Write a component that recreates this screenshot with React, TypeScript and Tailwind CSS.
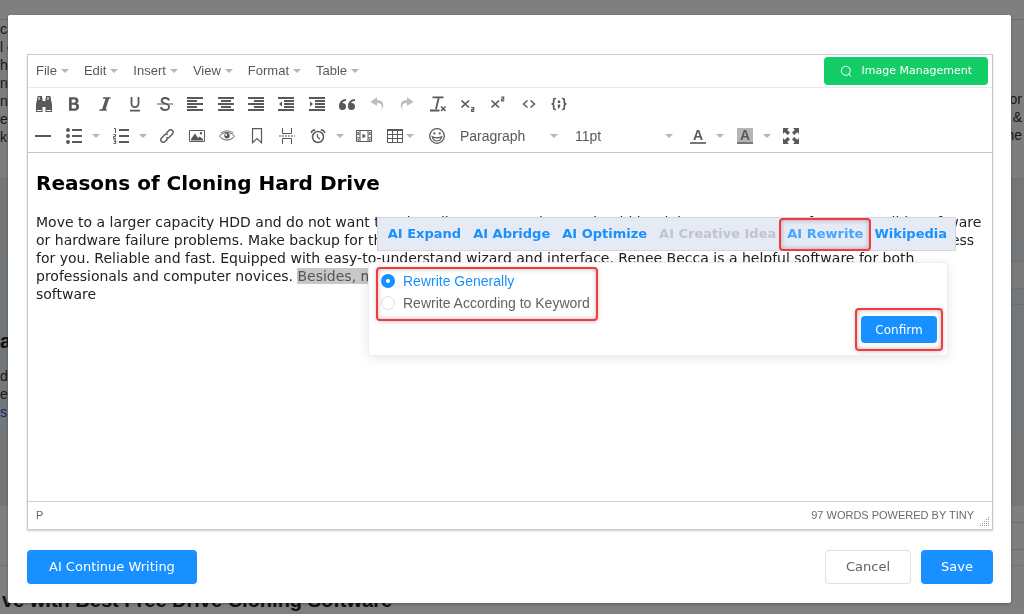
import { useState } from "react";
import type { ReactNode } from "react";

const verdana = "font-['Verdana','DejaVu_Sans',sans-serif]";
const arial = "font-['Arial','Liberation_Sans',sans-serif]";

const menus = ["File", "Edit", "Insert", "View", "Format", "Table"];

const pageLinesLeft = ["ca", "l c", "h", "nt", "nt", "er", "ku"];
const pageLinesRight = ["or", "&", "he"];

function Caret() {
  return (
    <svg aria-hidden="true" width="8" height="4" viewBox="0 0 8 4" className="shrink-0 fill-[#b0b7bf]">
      <path d="M0 0h8L4 4z" />
    </svg>
  );
}

function Icon({ children }: { children: ReactNode }) {
  return (
    <svg
      aria-hidden="true"
      width="16"
      height="16"
      viewBox="0 0 16 16"
      fill="none"
      stroke="currentColor"
      className="shrink-0"
    >
      {children}
    </svg>
  );
}

const solid = { fill: "currentColor", stroke: "none" };

const formatTools: { label: string; muted?: boolean; icon: ReactNode }[] = [
  {
    label: "Find and replace",
    icon: (
      <path
        {...solid}
        d="M1.500 0H6v2h.5v3h3V2h.5V0h4.500v2h.5v3h.4l.6 4v7H9.500v-5h-3v5H0V9l.6-4H1V2h.5zM2.600 1v3h1V1zM11.500 1v3h1V1zM1 14v1h4.500v-1zM10.500 14v1H15v-1z"
        fillRule="evenodd"
      />
    ),
  },
  {
    label: "Bold",
    icon: (
      <path
        {...solid}
        fillRule="evenodd"
        d="M3 1.300h5.500c2.600 0 4 1.200 4 3.400 0 1.400-.7 2.300-1.700 2.800 1.500.4 2.300 1.500 2.300 3 0 2.600-1.600 4.200-4.500 4.200H3zM5.700 3.500v3.200h2.100c1.200 0 1.900-.6 1.900-1.600s-.6-1.600-1.900-1.600zM5.700 8.800v3.800h2.400c1.400 0 2.100-.7 2.100-1.900s-.8-1.900-2.100-1.900z"
      />
    ),
  },
  { label: "Italic", icon: <path {...solid} d="M6.200 1.300h7.500l-.3 1.500h-1.400L8.700 13.200h1.200l-.3 1.500H2.300l.3-1.500h2.500L8.500 2.800H5.900z" /> },
  { label: "Underline", icon: <path strokeWidth="1.800" d="M4.500 1v6.500a3.500 3.700 0 0 0 7 0V1M3 14.700h10" /> },
  {
    label: "Strikethrough",
    icon: (
      <>
        <path strokeWidth="1.800" d="M12 4.500C11.600 2.700 10.200 2 8.200 2 6 2 4.600 3 4.600 4.600c0 1.700 1.400 2.300 3.500 2.900 2.400.6 4 1.400 4 3.300 0 1.900-1.500 3.200-4 3.200-2.400 0-3.900-1.100-4.200-3" />
        <path d="M0 8h16" />
      </>
    ),
  },
  { label: "Align left", icon: <path strokeWidth="2" d="M0 2h16M0 5h10M0 8h16M0 11h10M0 14h16" /> },
  { label: "Align center", icon: <path strokeWidth="2" d="M0 2h16M3 5h10M0 8h16M3 11h10M0 14h16" /> },
  { label: "Align right", icon: <path strokeWidth="2" d="M0 2h16M6 5h10M0 8h16M6 11h10M0 14h16" /> },
  {
    label: "Decrease indent",
    icon: (
      <>
        <path strokeWidth="2" d="M0 2h16M6 5h10M6 8h10M6 11h10M0 14h16" />
        <path {...solid} d="M4 5.500v5L1 8z" />
      </>
    ),
  },
  {
    label: "Increase indent",
    icon: (
      <>
        <path strokeWidth="2" d="M0 2h16M6 5h10M6 8h10M6 11h10M0 14h16" />
        <path {...solid} d="M1 5.500v5L4 8z" />
      </>
    ),
  },
  {
    label: "Blockquote",
    icon: (
      <path
        {...solid}
        d="M3.500 7a3.500 3.500 0 1 1-3.500 3.500V10c0-3.900 3-7 7-7v2C5.400 5 4 5.600 3 7zM12.500 7A3.500 3.500 0 1 1 9 10.500V10c0-3.900 3-7 7-7v2c-1.600 0-3 .6-4 2z"
      />
    ),
  },
  {
    label: "Undo",
    muted: true,
    icon: <path {...solid} d="M12 14.500c2-4.500.500-7.500-4-7.400V10L1.500 5.700 8 1.200V4c6.300-.1 8.200 5.500 4 10.500z" />,
  },
  {
    label: "Redo",
    muted: true,
    icon: <path {...solid} d="M4 14.500C2 10 3.500 7 8 7.100V10l6.500-4.300L8 1.200V4C1.700 3.900-.2 9.500 4 14.500z" />,
  },
  {
    label: "Clear formatting",
    icon: (
      <>
        <path strokeWidth="1.800" d="M2.500 1.300h11M8.800 1.500L6 13M0 14.500h9.500" />
        <path strokeWidth="1.500" d="M11 10.500l4.500 4.500M15.500 10.500L11 15" />
      </>
    ),
  },
  {
    label: "Subscript",
    icon: (
      <>
        <path strokeWidth="1.700" d="M1.500 4.500l7.500 7M9 4.500l-7.500 7" />
        <path strokeWidth="1.200" d="M11.200 11.600h2.500v2h-2v1.800h2.500" />
      </>
    ),
  },
  {
    label: "Superscript",
    icon: (
      <>
        <path strokeWidth="1.700" d="M1.500 4.500l7.500 7M9 4.500l-7.500 7" />
        <path strokeWidth="1.200" d="M11.200 1.100h2.500v2h-2v1.800h2.500" />
      </>
    ),
  },
  { label: "Source code", icon: <path strokeWidth="1.500" d="M6.500 4.500L2.500 8l4 3.500M9.500 4.500l4 3.500-4 3.500" /> },
  {
    label: "Code sample",
    icon: (
      <>
        <path strokeWidth="1.700" d="M5 2.500H4C3 2.500 2.700 3 2.700 4v2.300C2.700 7.500 2 8 .5 8 2 8 2.700 8.500 2.700 9.700V12c0 1 .3 1.500 1.300 1.500h1M11 2.500h1c1 0 1.300.5 1.300 1.500v2.300c0 1.200.7 1.700 2.200 1.700-1.500 0-2.200.5-2.200 1.700V12c0 1-.3 1.500-1.300 1.500h-1" />
        <path {...solid} d="M6.800 4.500h2.400v2.400H6.800zM6.800 8.500h2.400v2L8 12.500H6.600l.7-1.800h-.5z" />
      </>
    ),
  },
];

function ToolButton({ label, children }: { label: string; children: ReactNode }) {
  return (
    <button type="button" aria-label={label} className="flex h-7 w-[30px] shrink-0 items-center justify-center">
      {children}
    </button>
  );
}

function SplitButton({ label, children }: { label: string; children: ReactNode }) {
  return (
    <button type="button" aria-label={label} className="flex h-7 w-[47px] shrink-0 items-center gap-2.5 pl-2">
      {children}
      <Caret />
    </button>
  );
}

function ToolSelect({ label, options }: { label: string; options: string[] }) {
  return (
    <div className="relative flex h-7 w-[115px] shrink-0 items-center">
      <select aria-label={label} className="w-full appearance-none bg-transparent pl-2 text-sm outline-none">
        {options.map((option) => (
          <option key={option}>{option}</option>
        ))}
      </select>
      <span className="pointer-events-none absolute right-[9px]">
        <Caret />
      </span>
    </div>
  );
}

function InsertToolbar() {
  return (
    <div className="flex items-center">
      <ToolButton label="Horizontal line">
        <Icon>
          <path strokeWidth="2" d="M0 8h16" />
        </Icon>
      </ToolButton>
      <SplitButton label="Bullet list">
        <Icon>
          <path strokeWidth="2" d="M6 2h10M6 8h10M6 14h10" />
          <path {...solid} d="M2 0a2 2 0 1 1 0 4 2 2 0 0 1 0-4zM2 6a2 2 0 1 1 0 4 2 2 0 0 1 0-4zM2 12a2 2 0 1 1 0 4 2 2 0 0 1 0-4z" />
        </Icon>
      </SplitButton>
      <SplitButton label="Numbered list">
        <Icon>
          <path strokeWidth="2" d="M6 2h10M6 8h10M6 14h10" />
          <path d="M1 .5h1.500V5M.5 6.500h2v2h-2v1.800h2.500M.5 11.800h2.200v3.700H.5M1 13.600h1.500" />
        </Icon>
      </SplitButton>
      <ToolButton label="Insert link">
        <Icon>
          <g strokeWidth="1.400" transform="rotate(-45 8 8)">
            <path d="M6.500 8.500A2.300 2.300 0 0 0 8.700 10.500h4.500a2.500 2.500 0 0 0 0-5H9.500" />
            <path d="M9.500 7.500A2.300 2.300 0 0 0 7.300 5.500H2.800a2.500 2.500 0 0 0 0 5H6.500" />
          </g>
        </Icon>
      </ToolButton>
      <ToolButton label="Insert image">
        <Icon>
          <path d="M.5 2.500h15v11H.5z" />
          <path {...solid} d="M2 12.500V11l4-5.500L9 10l1.500-1.500L14 11v1.500zM12 4a1.300 1.300 0 1 1 0 2.600A1.300 1.300 0 0 1 12 4z" />
        </Icon>
      </ToolButton>
      <ToolButton label="Preview">
        <Icon>
          <path d="M.5 8.200C2.500 5.700 5 4.500 8 4.500s5.500 1.200 7.500 3.700c-2 2.500-4.500 3.800-7.500 3.800S2.500 10.700.5 8.200z" />
          <path strokeWidth=".8" d="M1.500 5C5 2.300 11 2.300 14.500 5" />
          <circle cx="8" cy="7.800" r="2.700" {...solid} />
          <circle cx="7.200" cy="7" r=".9" fill="white" stroke="none" />
        </Icon>
      </ToolButton>
      <ToolButton label="Anchor">
        <Icon>
          <path strokeWidth="1.200" d="M3.500.6h9v14.100L8 10.500l-4.500 4.200z" />
        </Icon>
      </ToolButton>
      <ToolButton label="Page break">
        <Icon>
          <path d="M3.500 0v5.500h9V0M3.500 16v-5.500h9V16" />
          <path strokeDasharray="2 1" d="M0 8h16" />
        </Icon>
      </ToolButton>
      <SplitButton label="Insert date/time">
        <Icon>
          <circle cx="8" cy="9" r="5.500" strokeWidth="1.500" />
          <path strokeWidth="1.200" d="M7.500 6v3l2.500 2.200" />
          <path strokeWidth="1.600" d="M1.500 5.200a2.700 2.700 0 0 1 3.700-2.900M14.500 5.200a2.700 2.700 0 0 0-3.700-2.900" />
        </Icon>
      </SplitButton>
      <ToolButton label="Insert video">
        <Icon>
          <path d="M.5 2.500h15v11H.5zM4 2.500v11M12 2.500v11M.5 6.200H4M.5 9.800H4M12 6.200h3.500M12 9.800h3.500" />
          <path {...solid} d="M6.500 5.500v5L10 8zM1.500 4h1.500v1.500H1.500zM13 4h1.500v1.500H13zM1.500 11h1.500v1.500H1.500zM13 11h1.500v1.500H13z" />
        </Icon>
      </ToolButton>
      <button type="button" aria-label="Table" className="flex h-7 w-[43px] shrink-0 items-center gap-[3px] pl-2">
        <Icon>
          <path d="M.5 1.500h15v13H.5zM.5 6.500h15M.5 10.500h15M5.500 3v11.500M10.500 3v11.500" />
          <path {...solid} d="M0 1h16v2H0z" />
        </Icon>
        <Caret />
      </button>
      <ToolButton label="Emoticons">
        <Icon>
          <circle cx="8" cy="8" r="7.300" strokeWidth="1.300" />
          <path {...solid} d="M5.300 4.300a1.100 1.100 0 1 1 0 2.200 1.100 1.100 0 0 1 0-2.200zM10.700 4.300a1.100 1.100 0 1 1 0 2.200 1.100 1.100 0 0 1 0-2.200z" />
          <path strokeWidth="1.200" d="M3.300 8.800c2.700 1.300 6.700 1.300 9.400 0-.7 2.800-2.400 4.200-4.700 4.200s-4-1.400-4.700-4.200z" />
        </Icon>
      </ToolButton>
      <ToolSelect label="Block format" options={["Paragraph", "Heading 1", "Heading 2"]} />
      <ToolSelect label="Font size" options={["11pt", "12pt", "14pt"]} />
      <SplitButton label="Text color">
        <span className="flex h-4 w-4 items-center justify-center border-b-2 border-[#777] text-sm leading-4 font-bold">A</span>
      </SplitButton>
      <SplitButton label="Background color">
        <span className="flex h-4 w-4 items-center justify-center border-b-2 border-[#777] bg-[#b5b5b5] text-sm leading-4 font-bold">A</span>
      </SplitButton>
      <ToolButton label="Fullscreen">
        <Icon>
          <path
            {...solid}
            d="M0 0h6L4.200 1.800 7 4.700 4.700 7 1.800 4.200 0 6zM16 0v6l-1.800-1.800L11.300 7 9 4.700l2.800-2.900L10 0zM0 16v-6l1.800 1.800L4.700 9 7 11.300l-2.800 2.900L6 16zM16 16h-6l1.800-1.800L9 11.300 11.300 9l2.900 2.800L16 10z"
          />
        </Icon>
      </ToolButton>
    </div>
  );
}

function AiToolbar() {
  const link = "text-[#1890ff]";
  return (
    <div className="flex h-[34px] items-center border border-[#d3d6dc] bg-[#e6eaf5] pr-2 pl-2.5 text-[13px] font-bold whitespace-nowrap">
      <div className="flex gap-3">
        <button type="button" className={link}>AI Expand</button>
        <button type="button" className={link}>AI Abridge</button>
        <button type="button" className={link}>AI Optimize</button>
        <button type="button" disabled className="text-[#c0c4cc]">AI Creative Idea</button>
      </div>
      <button
        type="button"
        className="mx-[3px] h-[33px] rounded border-2 border-[#f5393d] px-1.5 text-[#46a6ff] shadow-[inset_0_0_5px_rgba(0,0,0,0.3)]"
      >
        AI Rewrite
      </button>
      <button type="button" className={link}>Wikipedia</button>
    </div>
  );
}

function RewritePanel() {
  const [mode, setMode] = useState("general");
  const options = [
    { value: "general", label: "Rewrite Generally" },
    { value: "keyword", label: "Rewrite According to Keyword" },
  ];

  return (
    <div className="flex h-[94px] justify-between rounded border border-[#ebeef5] bg-white pt-1 pr-1 pb-1 pl-[7px] shadow-[0_2px_12px_rgba(0,0,0,0.1)]">
      <div
        className={`h-[54px] w-[222px] rounded border-2 border-[#f5393d] pt-px pl-[3px] text-sm shadow-[inset_0_0_5px_rgba(0,0,0,0.25),0_1px_4px_rgba(0,0,0,0.2)] ${arial}`}
      >
        {options.map((option) => (
          <label
            key={option.value}
            className="flex h-[22px] items-center gap-2 whitespace-nowrap text-[#606266] has-checked:text-[#1890ff]"
          >
            <input
              type="radio"
              name="rewrite-mode"
              checked={mode === option.value}
              onChange={() => setMode(option.value)}
              className="size-3.5 appearance-none rounded-full border border-[#dcdfe6] bg-white checked:border-[5px] checked:border-[#1890ff]"
            />
            {option.label}
          </label>
        ))}
      </div>
      <div className="self-end rounded border-2 border-[#f5393d] px-1 py-1.5 shadow-[inset_0_0_5px_rgba(0,0,0,0.3),0_1px_4px_rgba(0,0,0,0.2)]">
        <button type="button" className="flex h-[27px] w-[76px] items-center justify-center rounded-sm bg-[#1890ff] text-xs text-white">
          Confirm
        </button>
      </div>
    </div>
  );
}

function Editor() {
  return (
    <section className="flex flex-1 flex-col border border-[#c9c9c9] bg-white shadow-[0_1px_2px_rgba(0,0,0,0.2)]">
      <div className={`border-b border-[#c5c5c5] text-[#595959] ${arial}`}>
        <div className="flex h-[33px] items-center justify-between border-b border-[#e8e8e8] pr-1">
          <div className="flex gap-[15px] pl-2 text-[13px]">
            {menus.map((menu) => (
              <button type="button" key={menu} className="flex items-center gap-1">
                {menu}
                <Caret />
              </button>
            ))}
          </div>
          <button
            type="button"
            className={`flex h-7 items-center gap-2.5 rounded-sm bg-[#13ce66] px-4 text-[11px] text-white ${verdana}`}
          >
            <svg aria-hidden="true" width="12" height="12" viewBox="0 0 12 12" fill="none" stroke="currentColor">
              <circle cx="5.800" cy="5.800" r="4.500" />
              <path d="M9 9l2 2.500" />
            </svg>
            Image Management
          </button>
        </div>
        <div className="flex h-8 w-[547px] items-center justify-between px-2">
          {formatTools.map((tool) => (
            <button type="button" key={tool.label} aria-label={tool.label} className={tool.muted ? "text-[#bdbdbd]" : ""}>
              <Icon>{tool.icon}</Icon>
            </button>
          ))}
        </div>
        <div className="flex h-8 items-center">
          <InsertToolbar />
        </div>
      </div>

      <div className="relative flex-1 px-2 pt-4">
        <h2 className="text-xl leading-7 font-bold text-black">Reasons of Cloning Hard Drive</h2>
        <p className="mt-4 text-sm leading-[18px] text-[#222]">
          Move to a larger capacity HDD and do not want to reinstall system. Or do you should be right now as your Perfect as possible software
          or hardware failure problems. Make backup for the important files and data of your drive. The cloning program can guide you process
          for you. Reliable and fast. Equipped with easy-to-understand wizard and interface. Renee Becca is a helpful software for both
          professionals and computer novices. <mark className="bg-[#c8c8c8] text-[#555]">Besides, mi</mark>
          <br />
          software
        </p>
        <div className="absolute top-16 right-9">
          <AiToolbar />
        </div>
        <div className="absolute top-[109px] right-11 w-[580px]">
          <RewritePanel />
        </div>
      </div>

      <footer className={`flex h-7 items-center justify-between border-t border-[#d0d0d0] pl-2 text-[11px] text-[#6b6b6b] ${arial}`}>
        <span>P</span>
        <span className="flex h-full items-center gap-1.5 pr-0.5">
          97 WORDS POWERED BY TINY
          <svg aria-hidden="true" width="10" height="10" viewBox="0 0 10 10" className="mb-0.5 self-end fill-[#999]">
            <path d="M8 0h1v1H8zM6 2h1v1H6zM8 2h1v1H8zM4 4h1v1H4zM6 4h1v1H6zM8 4h1v1H8zM2 6h1v1H2zM4 6h1v1H4zM6 6h1v1H6zM8 6h1v1H8zM0 8h1v1H0zM2 8h1v1H2zM4 8h1v1H4zM6 8h1v1H6zM8 8h1v1H8z" />
          </svg>
        </span>
      </footer>
    </section>
  );
}

function PageBehind() {
  return (
    <div aria-hidden="true" className={`flex h-screen flex-col overflow-hidden bg-white text-sm leading-[18px] text-[#333] ${arial}`}>
      <div className="h-5 shrink-0 border-b border-[#ddd]" />
      <div className="flex h-[158px] shrink-0 justify-between overflow-hidden bg-[#fafafa]">
        <div>
          {pageLinesLeft.map((line, i) => (
            <p key={i}>{line}</p>
          ))}
        </div>
        <div className="pt-[70px] pr-0.5 text-right">
          {pageLinesRight.map((line) => (
            <p key={line}>{line}</p>
          ))}
        </div>
      </div>
      <div className="h-[67px] shrink-0 border-t border-[#dde3ee] bg-[#ededef]" />
      <div className="flex h-[193px] shrink-0 justify-between bg-[#e6eff5]">
        <div className="pt-[86px]">
          <p className="text-xl leading-5 font-bold text-[#222]">a</p>
          <div className="mt-4">
            <p>d</p>
            <p>er</p>
            <p>
              <span className="text-blue-700">s</span>.
            </p>
          </div>
        </div>
        <div className="w-5 pt-4">
          <div className="h-7 border-y border-[#ddd] bg-[#f5f5f5]" />
          <div className="h-4 border-b border-[#d5dde3]" />
        </div>
      </div>
      <div className="h-[67px] shrink-0 bg-[#ededef]" />
      <div className="flex flex-1 flex-col border-t border-[#f5f5f5]">
        <div className="ml-auto w-5 pt-4">
          <div className="h-7 border-y border-[#ddd]" />
        </div>
        <div className="h-4 border-b border-[#e0e5f0]" />
        <p className="pt-5 pl-0.5 text-xl font-bold whitespace-nowrap text-[#222]">ve with Best Free Drive Cloning Software</p>
      </div>
    </div>
  );
}

export default function App() {
  return (
    <div className={verdana}>
      <PageBehind />
      <div className="fixed inset-0 flex bg-black/50 pt-[15px] pr-[13px] pb-[11px] pl-2">
        <main
          role="dialog"
          aria-label="Article editor"
          className="flex flex-1 flex-col rounded-xs bg-white pt-[39px] pr-[18px] pb-[19px] pl-[19px] shadow-[0_1px_3px_rgba(0,0,0,0.3)]"
        >
          <Editor />
          <div className="mt-5 flex items-center justify-between text-[13px]">
            <button type="button" className="h-[34px] rounded bg-[#1890ff] px-[22px] text-white">
              AI Continue Writing
            </button>
            <div className="flex gap-2.5">
              <button type="button" className="h-[34px] rounded border border-[#dcdfe6] bg-white px-5 text-[#606266]">
                Cancel
              </button>
              <button type="button" className="h-[34px] rounded bg-[#1890ff] px-5 text-white">
                Save
              </button>
            </div>
          </div>
        </main>
      </div>
    </div>
  );
}
